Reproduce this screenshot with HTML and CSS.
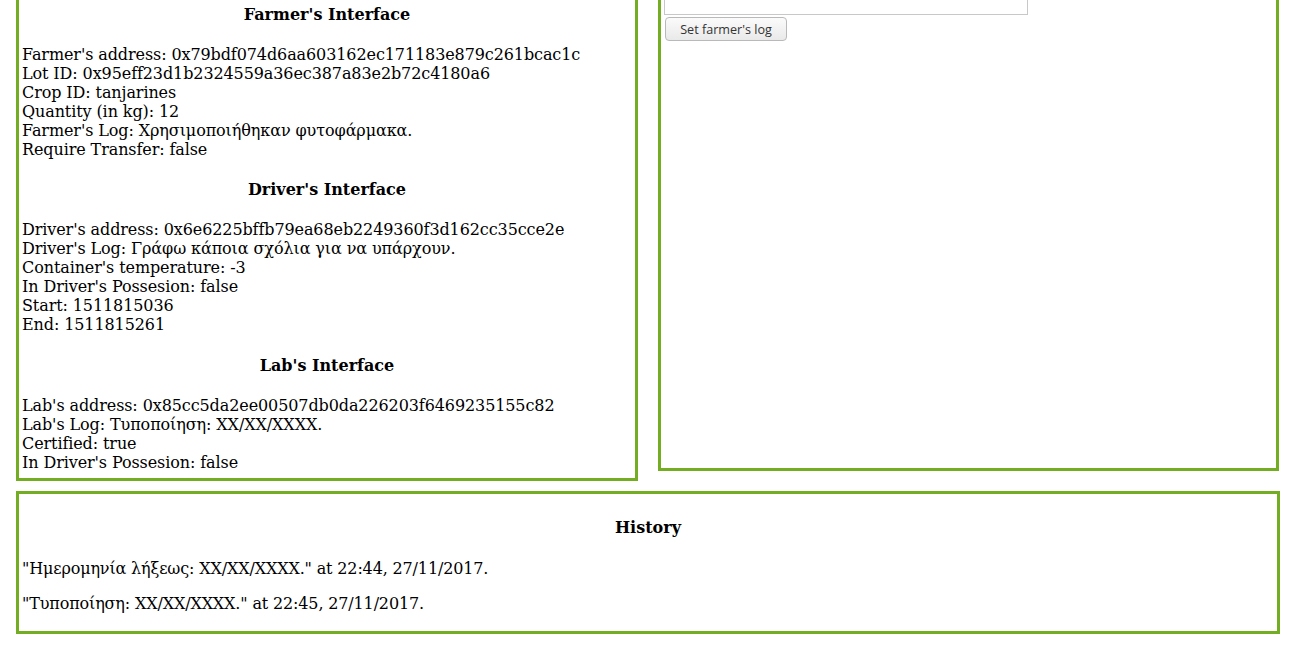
FILE: index.html
```html
<!DOCTYPE html>
<html>
<head>
<meta charset="utf-8">
<link rel="stylesheet" href="styles.css">
</head>
<body>
<div class="page">
  <div class="top">
    <div class="panel left">
      <h4 class="title">Farmer's Interface</h4>
      <div class="lines">
        Farmer's address: 0x79bdf074d6aa603162ec171183e879c261bcac1c<br>
        Lot ID: 0x95eff23d1b2324559a36ec387a83e2b72c4180a6<br>
        Crop ID: tanjarines<br>
        Quantity (in kg): 12<br>
        Farmer's Log: Χρησιμοποιήθηκαν φυτοφάρμακα.<br>
        Require Transfer: false
      </div>
      <h4 class="title">Driver's Interface</h4>
      <div class="lines">
        Driver's address: 0x6e6225bffb79ea68eb2249360f3d162cc35cce2e<br>
        Driver's Log: Γράφω κάποια σχόλια για να υπάρχουν.<br>
        Container's temperature: -3<br>
        In Driver's Possesion: false<br>
        Start: 1511815036<br>
        End: 1511815261
      </div>
      <h4 class="title">Lab's Interface</h4>
      <div class="lines">
        Lab's address: 0x85cc5da2ee00507db0da226203f6469235155c82<br>
        Lab's Log: Τυποποίηση: XX/XX/XXXX.<br>
        Certified: true<br>
        In Driver's Possesion: false
      </div>
    </div>
    <div class="panel right">
      <textarea class="log-input"></textarea>
      <button class="btn" type="button">Set farmer's log</button>
    </div>
  </div>
  <div class="panel history">
    <h4 class="title history-title">History</h4>
    <p class="entry">"Ημερομηνία λήξεως: XX/XX/XXXX." at 22:44, 27/11/2017.</p>
    <p class="entry">"Τυποποίηση: XX/XX/XXXX." at 22:45, 27/11/2017.</p>
  </div>
</div>
</body>
</html>
```

FILE: styles.css
```css
html, body {
  margin: 0;
  padding: 0;
  background: #ffffff;
}

body {
  font-family: "DejaVu Serif", serif;
  font-size: 16px;
  color: #000000;
}

.page {
  margin-top: -21.6px;
  padding-left: 16px;
  width: 1264px;
}

.top {
  display: flex;
  align-items: flex-start;
  gap: 20px;
}

.panel {
  border: 3px solid #73AD21;
  box-sizing: border-box;
}

.left {
  width: 622px;
  padding: 2px 3px 5.6px 3px;
}

.right {
  width: 621px;
  height: 492.6px;
  padding: 3.6px 3px 3px 3px;
}

.title {
  font-size: 16px;
  font-weight: bold;
  text-align: center;
  margin: 21.28px 0;
}

.lines {
  margin: 0;
  letter-spacing: -0.1px;
}

.log-input {
  display: block;
  box-sizing: border-box;
  width: 364px;
  height: 30px;
  margin: 0;
  border: 1px solid #c8c8c8;
  padding: 2px;
  resize: none;
}

.btn {
  display: block;
  margin: 2px 0 0 1px;
  width: 122px;
  height: 24px;
  box-sizing: border-box;
  border: 1px solid #b9b9b9;
  border-radius: 4px;
  background: linear-gradient(#fbfbfb, #e9e9e9);
  font-family: "Open Sans", "Noto Sans", sans-serif;
  font-size: 12.6px;
  color: #333333;
  padding: 0;
}

.history {
  margin-top: 10px;
  padding: 3px 3px 2px 3px;
}

.history-title {
  margin-bottom: 22px;
}

.entry {
  margin: 16px 0;
  letter-spacing: -0.15px;
}
```
